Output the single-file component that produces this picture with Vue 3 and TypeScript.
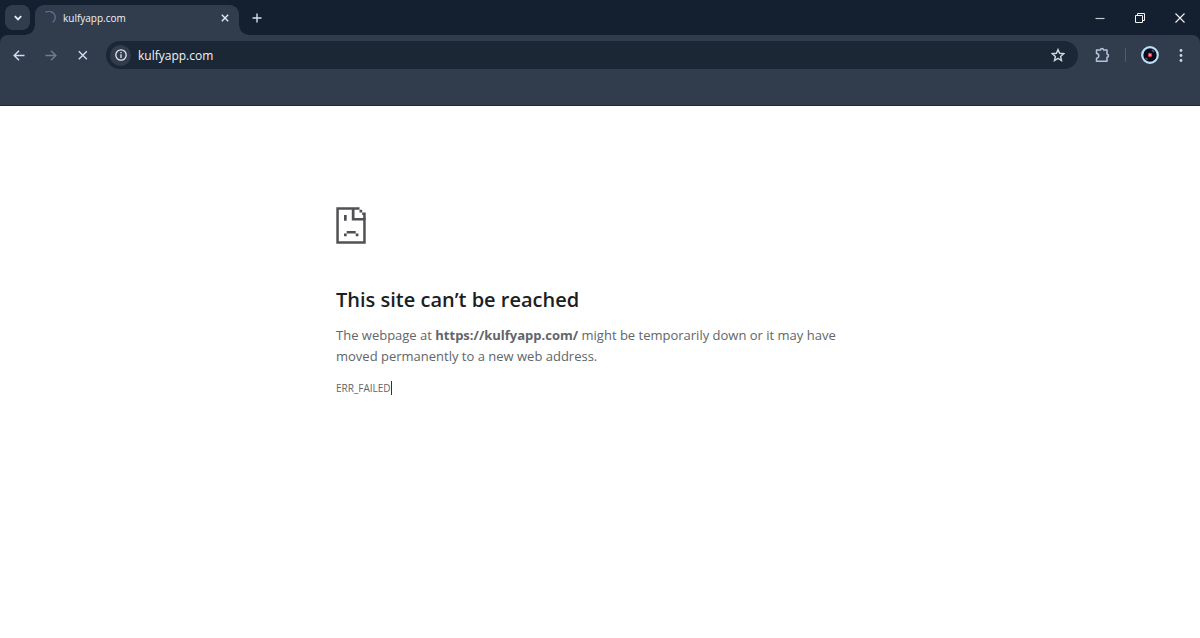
<script setup lang="ts">
import { ref } from 'vue'

const host = 'kulfyapp.com'
const address = ref(host)
const pageUrl = `https://${host}/`
</script>

<template>
  <div class="browser">
    <header class="chrome">
      <div class="tab-strip">
        <button class="tab-search" type="button" aria-label="Search tabs">
          <svg width="10" height="10" viewBox="0 0 10 10"><path d="M1.8 3.2 5 6.4 8.2 3.2" fill="none" stroke="#e6edf5" stroke-width="1.8" /></svg>
        </button>
        <div class="tab">
          <svg class="spinner" width="14" height="14" viewBox="0 0 14 14"><path d="M2.6 1.4A6 6 0 1 1 9.6 11.4" fill="none" stroke="#566b8e" stroke-width="1.5" /></svg>
          <span class="tab-title">{{ host }}</span>
          <button class="tab-close" type="button" aria-label="Close tab">
            <svg width="8" height="8" viewBox="0 0 8 8"><path d="M.8.8l6.4 6.4M7.2.8.8 7.2" stroke="#e3e9f0" stroke-width="1.4" /></svg>
          </button>
        </div>
        <button class="new-tab" type="button" aria-label="New tab">
          <svg width="10" height="10" viewBox="0 0 10 10"><path d="M5 .5v9M.5 5h9" stroke="#d3e0ee" stroke-width="1.4" /></svg>
        </button>
        <div class="window-controls">
          <button type="button" aria-label="Minimize">
            <svg width="10" height="10" viewBox="0 0 10 10"><path d="M.5 5.5h9" stroke="#c3c8cf" stroke-width="1.2" /></svg>
          </button>
          <button type="button" aria-label="Restore">
            <svg width="10" height="10" viewBox="0 0 10 10"><path d="M.5 2.5h7v7h-7zM2.5 2.5V.5h7v7h-2" fill="none" stroke="#f2f4f6" /></svg>
          </button>
          <button type="button" aria-label="Close">
            <svg width="10" height="10" viewBox="0 0 10 10"><path d="M.5.5l9 9M9.5.5l-9 9" stroke="#f2f4f6" stroke-width="1.1" /></svg>
          </button>
        </div>
      </div>

      <div class="panel">
        <div class="toolbar">
          <nav class="nav" aria-label="Navigation">
            <button type="button" aria-label="Back">
              <svg width="12" height="12" viewBox="0 0 12 12"><path d="M11.5 6.5h-10M6 1.7 1.2 6.5 6 11.3" fill="none" stroke="#cbdcee" stroke-width="1.5" /></svg>
            </button>
            <button type="button" aria-label="Forward" disabled>
              <svg width="12" height="12" viewBox="0 0 12 12"><path d="M.5 6.500h10M6 1.700 10.800 6.500 6 11.300" fill="none" stroke="#727b87" stroke-width="1.5" /></svg>
            </button>
            <button type="button" aria-label="Stop loading">
              <svg width="10" height="10" viewBox="0 0 10 10"><path d="M.8 1.2l8 8M8.8 1.2l-8 8" stroke="#cbdcee" stroke-width="1.5" /></svg>
            </button>
          </nav>
          <div class="omnibox">
            <button class="site-info" type="button" aria-label="View site information">
              <svg width="12" height="12" viewBox="0 0 12 12"><circle cx="6" cy="6" r="5.2" fill="none" stroke="#e3e9ef" stroke-width="1.3" /><path d="M6 5.2V9M6 2.9v1.3" stroke="#e3e9ef" stroke-width="1.3" /></svg>
            </button>
            <input v-model="address" class="address" type="text" aria-label="Address" spellcheck="false" />
            <button class="star" type="button" aria-label="Bookmark this page">
              <svg width="14" height="14" viewBox="0 0 14 14"><path d="M7 1.6 8.6 5.3 12.7 5.700 9.600 8.400 10.500 12.500 7 10.300 3.500 12.500 4.400 8.400 1.300 5.700 5.400 5.300z" fill="none" stroke="#d0d7df" stroke-width="1.4" /></svg>
            </button>
          </div>
          <div class="actions">
            <button class="extensions" type="button" aria-label="Extensions">
              <svg width="16" height="16" viewBox="0 0 16 16"><path d="M2.500 3H6.500A1.500 1.500 0 0 1 9.500 3H13V7.300A1.500 1.500 0 0 1 13 10.300V14.200H2.500V11.200A2.300 2.300 0 0 0 2.500 6.600z" fill="none" stroke="#b4c3dc" stroke-width="1.5" stroke-linejoin="round" /></svg>
            </button>
            <span class="divider"></span>
            <button class="profile" type="button" aria-label="Profile">
              <svg width="18" height="18" viewBox="0 0 18 18"><circle cx="9" cy="9" r="7.800" fill="#0a0c1e" stroke="#b9e0f8" stroke-width="2.200" /><path d="M11 4 13 6M4.500 12l2 1.500" stroke="#56606c" stroke-width="1.500" /><circle cx="9" cy="9" r="2.200" fill="#e33b48" /><circle cx="9" cy="9" r=".9" fill="#ffc2aa" /></svg>
            </button>
            <button class="menu" type="button" aria-label="Menu">
              <svg width="4" height="14" viewBox="0 0 4 14" fill="#c9d7e8"><circle cx="2" cy="2.500" r="1.400" /><circle cx="2" cy="7.500" r="1.400" /><circle cx="2" cy="12.500" r="1.400" /></svg>
            </button>
          </div>
        </div>
        <div class="bookmarks"></div>
      </div>
    </header>

    <main class="error-page">
      <svg class="sad-page" width="30" height="37" viewBox="0 0 30 37" fill="#505154" aria-hidden="true">
        <path d="M.3 .3H23.500V2.700H18.500V11H29.700V36.700H.3zM2.800 2.700V34.300H27.200V13.400H15.800V2.700z" fill-rule="evenodd" />
        <path d="M23.500 2.700h2.700v2.700h-2.700zM26.200 5.400h3.500v7h-2.500V8h-1zM8 8h2.700v5.800H8zM10.700 24h9v2.500h-9zM8 26.500h2.700v2.700H8zM19.700 26.500h2.700v2.700h-2.700z" />
      </svg>
      <h1>This site can’t be reached</h1>
      <p>The webpage at <strong>{{ pageUrl }}</strong> might be temporarily down or it may have moved permanently to a new web address.</p>
      <div class="code">ERR_FAILED<span class="caret"></span></div>
    </main>
  </div>
</template>

<style>
body {
  margin: 0;
  background: #fff;
}
</style>

<style scoped>
.browser {
  font-family: "Open Sans", "Noto Sans", sans-serif;
}

button {
  display: flex;
  flex: none;
  align-items: center;
  justify-content: center;
  margin: 0;
  padding: 0;
  border: 0;
  background: none;
}

.chrome {
  background: #14202f;
}

.tab-strip {
  display: flex;
  height: 35px;
  padding-left: 5px;
}

.tab-search {
  width: 25px;
  height: 25px;
  margin-top: 5px;
  border-radius: 8px;
  background: #313c4c;
}

.tab {
  position: relative;
  display: flex;
  align-items: center;
  box-sizing: border-box;
  width: 204px;
  height: 30px;
  margin: 5px 0 0 5px;
  padding: 0 8px 4px;
  border-radius: 9px 9px 0 0;
  background: #313c4c;
}

.tab::before,
.tab::after {
  content: "";
  position: absolute;
  bottom: 0;
  width: 9px;
  height: 9px;
}

.tab::before {
  right: 100%;
  background: radial-gradient(circle at 0 0, transparent 8px, #313c4c 9px);
}

.tab::after {
  left: 100%;
  background: radial-gradient(circle at 100% 0, transparent 8px, #313c4c 9px);
}

.spinner {
  flex: none;
}

.tab-title {
  flex: 1;
  margin-left: 6px;
  color: #f0f3f6;
  font-size: 10px;
  line-height: 16px;
}

.tab-close {
  width: 12px;
  height: 16px;
}

.new-tab {
  width: 25px;
  margin-left: 5px;
}

.window-controls {
  display: flex;
  margin-left: auto;
}

.window-controls button {
  width: 40px;
}

.panel {
  border-bottom: 1px solid #1f2937;
  border-radius: 8px 8px 0 0;
  background: #313c4c;
}

.toolbar {
  display: flex;
  align-items: center;
  height: 40px;
  padding: 0 3px;
}

.nav {
  display: flex;
}

.nav button {
  width: 32px;
  height: 32px;
}

.omnibox {
  display: flex;
  flex: 1;
  align-items: center;
  box-sizing: border-box;
  height: 28px;
  margin-left: 7px;
  padding: 0 13px 0 4px;
  border-radius: 14px;
  background: #1b2735;
}

.site-info {
  width: 21px;
  height: 21px;
  border-radius: 50%;
  background: #313c4c;
}

.address {
  flex: 1;
  min-width: 0;
  margin: 0 0 0 7px;
  padding: 2px 0 0;
  border: 0;
  outline: 0;
  background: none;
  color: #f0f3f6;
  font-family: inherit;
  font-size: 12px;
  line-height: 20px;
}

.actions {
  display: flex;
  align-items: center;
  gap: 15px;
  padding: 0 14px 0 16px;
}

.divider {
  width: 1px;
  height: 14px;
  background: #505c6d;
}

.menu {
  margin-left: 5px;
}

.bookmarks {
  height: 30px;
}

.error-page {
  max-width: 528px;
  margin: 0 auto;
  padding: 101px 24px 24px;
  color: #626569;
}

.sad-page {
  display: block;
}

h1 {
  margin: 41px 0 0;
  color: #1c1e22;
  font-size: 20px;
  font-weight: 600;
  line-height: 30px;
}

p {
  margin: 10px 0 0;
  font-size: 13px;
  line-height: 21px;
}

strong {
  font-weight: 700;
}

.code {
  display: flex;
  align-items: center;
  margin-top: 13px;
  font-size: 10px;
  line-height: 16px;
}

.caret {
  width: 1px;
  height: 14px;
  background: #303236;
}
</style>
